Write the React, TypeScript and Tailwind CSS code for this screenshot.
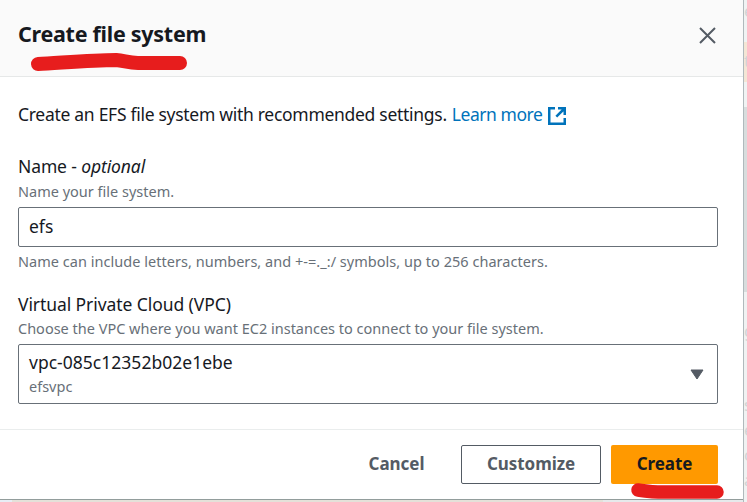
export default function App() {
  return (
    <div className="relative flex h-[502px] w-[747px] overflow-hidden bg-[#f0f2f2] font-['Noto_Sans','Open_Sans',sans-serif] text-[#16191f]">
      <div className="flex w-[743px] shrink-0 flex-col">
        <section className="flex h-[499px] flex-col bg-white">
          <header className="flex h-[77px] items-start justify-between border-b border-[#e6e8e8] bg-[#fafafa] pl-[18px] pr-[27px]">
            <h1 className="mt-[19px] whitespace-nowrap text-[21.5px] font-bold leading-[30px] tracking-[-0.27px]">Create file system</h1>
            <svg className="mt-[27px]" width="17" height="17" viewBox="0 0 17 17" fill="none" stroke="#545b64" strokeWidth="2">
              <path d="M1 1 16 16M16 1 1 16" />
            </svg>
          </header>
          <main className="h-[352px] pl-[18px] pr-[25px]">
            <p className="mt-[25px] flex items-center whitespace-nowrap text-[17.5px] leading-[24px]">
              <span className="tracking-[-0.29px]">Create an EFS file system with recommended settings.</span>
              <a className="ml-[5px] tracking-[-0.45px] text-[#0073bb]">Learn more</a>
              <svg className="ml-[6px] mt-[4px]" width="18" height="18" viewBox="0 0 18 18" fill="none" stroke="#0073bb" strokeWidth="2.5">
                <path d="M7 1.25H1.25v15.5h15.5V11M10 1.25h6.75V8M16.5 1.5 8.3 9.7" />
              </svg>
            </p>
            <label className="mt-[28px] block whitespace-nowrap text-[17.5px] leading-[24px] tracking-[-0.12px]">Name - <i>optional</i></label>
            <p className="mt-[2px] whitespace-nowrap text-[14.5px] leading-[22px] text-[#687078]">Name your file system.</p>
            <div className="mt-[5px] flex h-[40px] items-center rounded-[2px] border border-[#687078] px-[10px] pb-[2px] text-[17.5px]">efs</div>
            <p className="mt-[3px] whitespace-nowrap text-[14.5px] leading-[22px] tracking-[0.03px] text-[#687078]">Name can include letters, numbers, and +-=._:/ symbols, up to 256 characters.</p>
            <label className="mt-[20px] block whitespace-nowrap text-[17.5px] leading-[24px] tracking-[-0.08px]">Virtual Private Cloud (VPC)</label>
            <p className="mt-[1px] whitespace-nowrap text-[14.5px] leading-[22px] text-[#687078]">Choose the VPC where you want EC2 instances to connect to your file system.</p>
            <div className="mt-[5px] flex h-[60px] items-center justify-between rounded-[2px] border border-[#687078] pl-[10px] pr-[13px]">
              <div className="whitespace-nowrap">
                <div className="text-[17.5px] leading-[24px] tracking-[0.02px]">vpc-085c12352b02e1ebe</div>
                <div className="text-[14.5px] leading-[25px] text-[#687078]">efsvpc</div>
              </div>
              <svg width="14" height="11" viewBox="0 0 14 11"><path d="M1 1h12L7 10Z" fill="#545b64" stroke="#545b64" strokeLinejoin="round" /></svg>
            </div>
          </main>
          <footer className="flex h-[70px] items-start justify-end border-t border-[#eaeded] pr-[25px] pt-[15px] text-[17px] font-bold text-[#545b64]">
            <button className="h-[39px] w-[129px] pb-[2px] tracking-[-0.05px]">Cancel</button>
            <button className="mr-[10px] h-[39px] w-[140px] rounded-[2px] border border-[#545b64] pb-[2px] tracking-[-0.05px]">Customize</button>
            <button className="h-[39px] w-[107px] rounded-[2px] bg-[#ff9900] pb-[2px] tracking-[-0.05px] text-[#16191f]">Create</button>
          </footer>
        </section>
        <div className="h-px bg-[#929d9c]" />
        <div className="flex h-[2px]">
          <div className="w-[12px] bg-[#e7edf5]" />
          <div className="w-[591px] bg-[#e4e1d9]" />
          <div className="flex-1 bg-[#e6e9eb]" />
        </div>
      </div>
      <aside className="h-[502px] w-[4px] overflow-hidden border-l border-[#b0b9bc] text-[17px] text-[#d2d4d5]">
        <div className="h-[42px] bg-[#f0f3f3] pt-[2px] leading-[18px]">e</div>
        <div className="h-[40px] bg-[#f4e6d5] leading-[38px]">t</div>
        <div className="h-[25px] bg-[#f0f3f3]" />
        <div className="h-[185px] bg-[#d8dddd]" />
        <div className="h-[80px] pt-[27px] leading-[24px]">g</div>
        <div className="h-[130px] pt-[20px] leading-[25px]">s<br />e<br />c<br />a</div>
      </aside>
      <svg className="pointer-events-none absolute inset-0" width="747" height="502" fill="none" stroke="#e71d1d" strokeWidth="14" strokeLinecap="round" strokeLinejoin="round">
        <path d="M38 64C59 63 91 60 116 60C125 61 129 63 138 63H180" />
        <path d="M638 490C647 491 650 492 658 492H717" strokeWidth="13.5" />
      </svg>
    </div>
  );
}
